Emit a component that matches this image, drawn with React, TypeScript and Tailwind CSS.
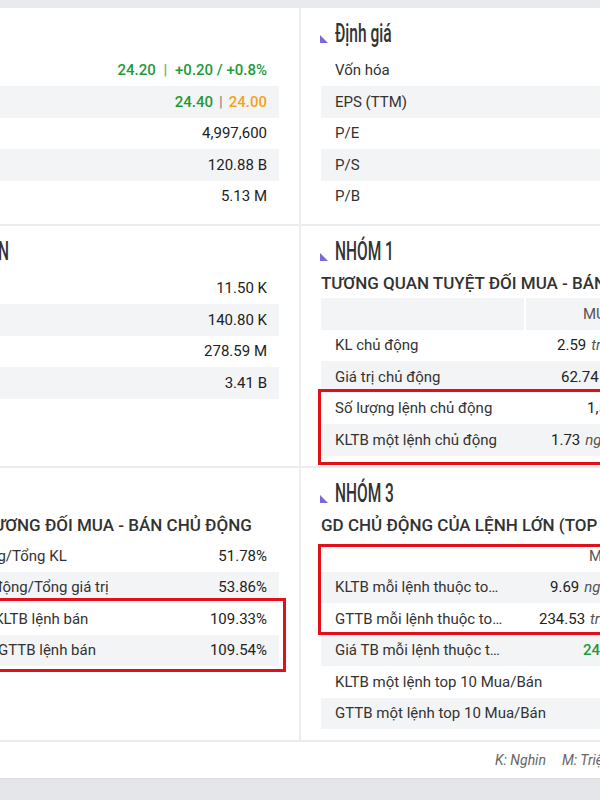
import React from "react";

const GREEN = "text-[#1f9a3a]";

function Title({ text }: { text: string }) {
  return (
    <div className="h-[35px] flex items-center">
      <svg width="8" height="8" viewBox="0 0 8 8" className="-ml-[1px] mt-[10px] mr-[7px] shrink-0">
        <polygon points="0,0 0,8 8,8" fill="#7b68dd" />
      </svg>
      <span className="inline-block origin-left scale-x-[0.62] text-[25px] font-medium leading-none text-[#333] whitespace-nowrap">
        {text}
      </span>
    </div>
  );
}

function Subtitle({ text }: { text: string }) {
  return (
    <div className="h-[29px] flex items-center whitespace-nowrap text-[17px] font-medium text-[#333] uppercase">
      {text}
    </div>
  );
}

function Row({
  label,
  value,
  gray,
  wide,
}: {
  label: string;
  value: React.ReactNode;
  gray?: boolean;
  wide?: boolean;
}) {
  return (
    <div
      className={`h-[31.5px] flex items-center justify-between ${wide ? "pl-[18px]" : "pl-[14px]"} pr-[12px] whitespace-nowrap ${
        gray ? "bg-[#f3f4f6]" : ""
      }`}
    >
      <span className="text-[#333]">{label}</span>
      <span className="text-[#222]">{value}</span>
    </div>
  );
}

function RedBox({ className }: { className: string }) {
  return <div className={`absolute border-[3px] border-[#e3101b] pointer-events-none ${className}`} />;
}

function Unit({ children }: { children: React.ReactNode }) {
  return <span className="ml-[5px] italic text-[#555]">{children}</span>;
}

function TRow({
  label,
  value,
  pad,
  gray,
  header,
  span,
}: {
  label?: string;
  value?: React.ReactNode;
  pad: string;
  gray?: boolean;
  header?: boolean;
  span?: boolean;
}) {
  return (
    <div className={`h-[31.5px] flex items-center whitespace-nowrap ${gray ? "bg-[#f3f4f6]" : ""}`}>
      {span ? (
        <div className="pl-[14px] text-[#333]">{label}</div>
      ) : (
        <>
          <div
            className={`w-[205px] shrink-0 h-full flex items-center pl-[14px] pr-[21px] text-[#333] ${
              header && gray ? "border-r-2 border-white" : ""
            }`}
          >
            <span className="truncate">{label}</span>
          </div>
          <div className={`flex-1 min-w-0 ${pad} ${header ? "text-[#555]" : "text-[#222]"}`}>{value}</div>
        </>
      )}
    </div>
  );
}

export default function App() {
  return (
    <div className="w-[600px] h-[800px] overflow-hidden bg-white font-['Roboto','Liberation_Sans',sans-serif] text-[15px]">
      <div className="h-[8px] bg-[#e9eaee]" />
      <div className="ml-[-149px] w-[900px] grid grid-cols-[448px_450px] grid-rows-[216px_240px_272px] gap-[2px] bg-[#ebedf0] pb-[2px]">
        {/* Section 1 left */}
        <div className="bg-white px-5 pt-[8px]">
          <Title text="Giao dịch" />
          <div className="mt-[3.5px]">
            <Row
              label="Giá"
              value={
                <span className={`font-medium ${GREEN}`}>
                  24.20 <span className="mx-[4px] text-[#5fae6d]">|</span> +0.20 / +0.8%
                </span>
              }
            />
            <Row
              gray
              label="Cao | Thấp"
              value={
                <span className="font-medium">
                  <span className={GREEN}>24.40</span>
                  <span className="mx-[6px] text-[#888]">|</span>
                  <span className="text-[#f5a21c]">24.00</span>
                </span>
              }
            />
            <Row label="KLGD" value="4,997,600" />
            <Row gray label="GTGD" value="120.88 B" />
            <Row label="KLTB" value="5.13 M" />
          </div>
        </div>
        {/* Section 1 right */}
        <div className="bg-white px-5 pt-[8px]">
          <Title text="Định giá" />
          <div className="mt-[3.5px]">
            <Row label="Vốn hóa" value="3.05 T" />
            <Row gray label="EPS (TTM)" value="1,973" />
            <Row label="P/E" value="12.26" />
            <Row gray label="P/S" value="1.08" />
            <Row label="P/B" value="1.41" />
          </div>
        </div>

        {/* Section 2 left */}
        <div className="bg-white px-5 pt-[8px]">
          <Title text="THỐNG KÊ PHIÊN" />
          <div className="mt-[3.5px]">
            <Row label="KL mua" value="11.50 K" />
            <Row gray label="KL bán" value="140.80 K" />
            <Row label="GT mua" value="278.59 M" />
            <Row gray label="GT bán" value="3.41 B" />
          </div>
        </div>
        {/* Section 2 right */}
        <div className="bg-white px-5 pt-[8px]">
          <Title text="NHÓM 1" />
          <Subtitle text="TƯƠNG QUAN TUYỆT ĐỐI MUA - BÁN CHỦ ĐỘNG" />
          <TRow header gray label="" value="MUA" pad="pl-[57px]" />
          <TRow
            label="KL chủ động"
            pad="pl-[31px]"
            value={
              <>
                2.59<Unit>triệu</Unit>
              </>
            }
          />
          <TRow
            gray
            label="Giá trị chủ động"
            pad="pl-[35px]"
            value={
              <>
                62.74<Unit>tỷ</Unit>
              </>
            }
          />
          <div className="relative">
            <TRow label="Số lượng lệnh chủ động" pad="pl-[61px]" value="1,532" />
            <TRow
              gray
              label="KLTB một lệnh chủ động"
              pad="pl-[25px]"
              value={
                <>
                  1.73<Unit>nghìn</Unit>
                </>
              }
            />
            <RedBox className="-top-[4px] -bottom-[9px] -left-[3px] -right-[3px]" />
          </div>
        </div>

        {/* Section 3 left */}
        <div className="bg-white px-5 pt-[8px]">
          <Title text="NHÓM 2" />
          <Subtitle text="TƯƠNG QUAN TƯƠNG ĐỐI MUA - BÁN CHỦ ĐỘNG" />
          <Row wide label="KL mua chủ động/Tổng KL" value="51.78%" />
          <Row wide gray label="Giá trị mua chủ động/Tổng giá trị" value="53.86%" />
          <div className="relative">
            <Row wide label="KLTB lệnh mua/KLTB lệnh bán" value="109.33%" />
            <Row wide gray label="GTTB lệnh mua/GTTB lệnh bán" value="109.54%" />
            <RedBox className="-top-[5px] -bottom-[6px] -left-[3px] -right-[7px]" />
          </div>
        </div>
        {/* Section 3 right */}
        <div className="bg-white px-5 pt-[8px]">
          <Title text="NHÓM 3" />
          <Subtitle text="GD CHỦ ĐỘNG CỦA LỆNH LỚN (TOP 10)" />
          <div className="relative">
            <TRow header label="" value="MUA" pad="pl-[63px]" />
            <TRow
              gray
              label="KLTB mỗi lệnh thuộc top 10 Mua/Bán"
              pad="pl-[24px]"
              value={
                <>
                  9.69<Unit>nghìn</Unit>
                </>
              }
            />
            <TRow
              label="GTTB mỗi lệnh thuộc top 10 Mua/Bán"
              pad="pl-[13px]"
              value={
                <>
                  234.53<Unit>triệu</Unit>
                </>
              }
            />
            <RedBox className="top-[4px] bottom-0 -left-[3px] -right-[3px]" />
          </div>
          <TRow
            gray
            label="Giá TB mỗi lệnh thuộc top 10 Mua/Bán"
            pad="pl-[57px]"
            value={<span className={`font-medium ${GREEN}`}>24.21</span>}
          />
          <TRow span label="KLTB một lệnh top 10 Mua/Bán" pad="" />
          <TRow span gray label="GTTB một lệnh top 10 Mua/Bán" pad="" />
        </div>
      </div>
      <div className="h-[36px] flex items-center pl-[495px] whitespace-nowrap italic text-[14px] text-[#666]">
        <span>K: Nghin</span>
        <span className="ml-[16px]">M: Triệu</span>
        <span className="ml-[16px]">B: Tỷ</span>
      </div>
      <div className="h-[22px] bg-[#e5e6ea] border-t border-[#dcdde1]" />
    </div>
  );
}
